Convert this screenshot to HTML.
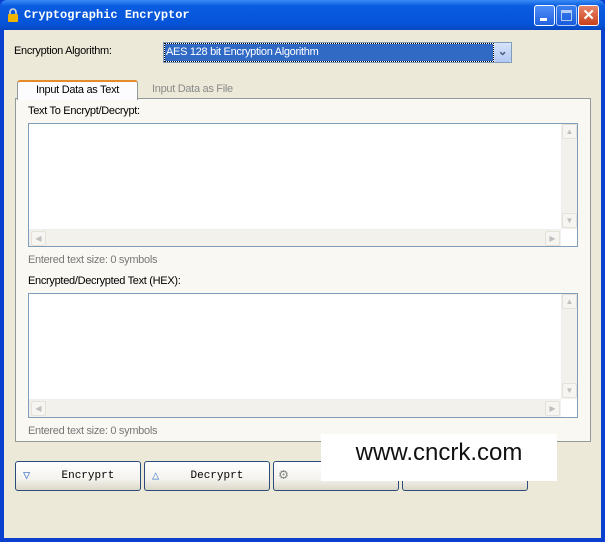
<!DOCTYPE html>
<html><head><style>
*{margin:0;padding:0;box-sizing:border-box}
body{width:605px;height:542px;overflow:hidden;background:#0a3fd0;font-family:"Liberation Sans",sans-serif;font-size:11px;letter-spacing:-0.3px;position:relative}
.abs{position:absolute}
.title{left:0;top:0;width:605px;height:30px;background:linear-gradient(#3a8cf5,#0a5ce0 20%,#0553d8 80%,#0847c0);border-radius:7px 7px 0 0}
.client{left:4px;top:30px;width:597px;height:508px;background:#ece9d8}
.tb{top:5px;width:21px;height:21px;border:1px solid #fff;border-radius:3px;background:linear-gradient(#4f8ef7,#2261e0)}
.ta{background:#fff;border:1px solid #7f9db9}
.vs{background:#f3f1ec;border-left:1px solid #eee}
.ar{position:absolute;width:15px;height:15px;border:1px solid #e4e2da;border-radius:2px;background:#f6f5f1;color:#c0c0c0;font-size:8px;text-align:center;line-height:13px;letter-spacing:0}
.btn{top:461px;width:126px;height:30px;border:1px solid #2b4b7a;border-radius:3px;background:linear-gradient(#fff,#f4f3ee 60%,#dcd8c8);font-family:"Liberation Mono",monospace;font-size:11px;text-align:center;line-height:28px;letter-spacing:0}
</style></head><body>
<div class="abs title"></div>
<div class="abs" style="left:7px;top:8px;width:12px;height:14px"><svg width="12" height="14"><path d="M3 6V4a3 3 0 0 1 6 0v2" stroke="#d8d8d8" stroke-width="1.6" fill="none"/><rect x="1" y="6" width="10" height="8" rx="1" fill="#f0b400"/></svg></div>
<div class="abs" style="left:24px;top:8px;color:#fff;font-family:'Liberation Mono',monospace;font-weight:bold;font-size:12px;letter-spacing:0">Cryptographic Encryptor</div>
<div class="abs tb" style="left:534px"><div class="abs" style="left:5px;top:12px;width:7px;height:3px;background:#fff"></div></div>
<div class="abs tb" style="left:556px;opacity:.7"><div class="abs" style="left:4px;top:4px;width:11px;height:11px;border:1px solid #fff;border-top-width:3px"></div></div>
<div class="abs tb" style="left:578px;background:linear-gradient(#e8856a,#c9401c);color:#fff;font-weight:bold;font-size:15px;text-align:center;line-height:19px">✕</div>
<div class="abs client"></div>
<div class="abs" style="left:14px;top:45px">Encryption Algorithm:</div>
<div class="abs" style="left:163px;top:42px;width:349px;height:21px;border:1px solid #7f9db9;background:#fff"></div>
<div class="abs" style="left:165px;top:44px;width:328px;height:17px;background:#316ac5;color:#fff;padding-left:1px;line-height:17px;outline:1px dotted #000">AES 128 bit Encryption Algorithm</div>
<div class="abs" style="left:494px;top:43px;width:17px;height:19px;background:linear-gradient(#d6e3fb,#b4c8f3);border-radius:2px;color:#4d6185;text-align:center;font-size:12px;font-weight:bold;line-height:17px">⌄</div>
<div class="abs" style="left:15px;top:98px;width:576px;height:344px;border:1px solid #919b9c;background:#f9f8f3"></div>
<div class="abs" style="left:17px;top:80px;width:121px;height:20px;border:1px solid #919b9c;border-bottom:none;border-top:2px solid #e68b2c;border-radius:3px 3px 0 0;background:#fcfcfe;text-align:center;line-height:17px">Input Data as Text</div>
<div class="abs" style="left:152px;top:83px;color:#8a8a8a">Input Data as File</div>
<div class="abs" style="left:28px;top:105px">Text To Encrypt/Decrypt:</div>
<div class="abs ta" style="left:28px;top:123px;width:550px;height:124px"></div>
<div class="abs vs" style="left:561px;top:124px;width:16px;height:105px"><div class="ar" style="left:0;top:0">▲</div><div class="ar" style="left:0;top:89px">▼</div></div>
<div class="abs vs" style="left:29px;top:229px;width:532px;height:17px;border-top:1px solid #eee"><div class="ar" style="left:1px;top:1px">◀</div><div class="ar" style="left:515px;top:1px">▶</div></div>
<div class="abs" style="left:28px;top:254px;color:#777">Entered text size: 0 symbols</div>
<div class="abs" style="left:28px;top:275px">Encrypted/Decrypted Text (HEX):</div>
<div class="abs ta" style="left:28px;top:293px;width:550px;height:125px"></div>
<div class="abs vs" style="left:561px;top:294px;width:16px;height:105px"><div class="ar" style="left:0;top:0">▲</div><div class="ar" style="left:0;top:89px">▼</div></div>
<div class="abs vs" style="left:29px;top:399px;width:532px;height:18px;border-top:1px solid #eee"><div class="ar" style="left:1px;top:1px">◀</div><div class="ar" style="left:515px;top:1px">▶</div></div>
<div class="abs" style="left:28px;top:425px;color:#777">Entered text size: 0 symbols</div>
<div class="abs btn" style="left:15px">&nbsp;&nbsp;&nbsp;Encryprt<span class="abs" style="left:7px;top:0;color:#4a7fd0;font-size:12px">▽</span></div>
<div class="abs btn" style="left:144px">&nbsp;&nbsp;&nbsp;Decryprt<span class="abs" style="left:7px;top:0;color:#4a7fd0;font-size:12px">△</span></div>
<div class="abs btn" style="left:273px"><span class="abs" style="left:5px;top:0;color:#888;font-size:15px">⚙</span></div>
<div class="abs btn" style="left:402px"></div>
<div class="abs" style="left:321px;top:434px;width:236px;height:47px;background:#fff;font-size:24px;text-align:center;line-height:38px;color:#111;letter-spacing:0">www.cncrk.com</div>
</body></html>
